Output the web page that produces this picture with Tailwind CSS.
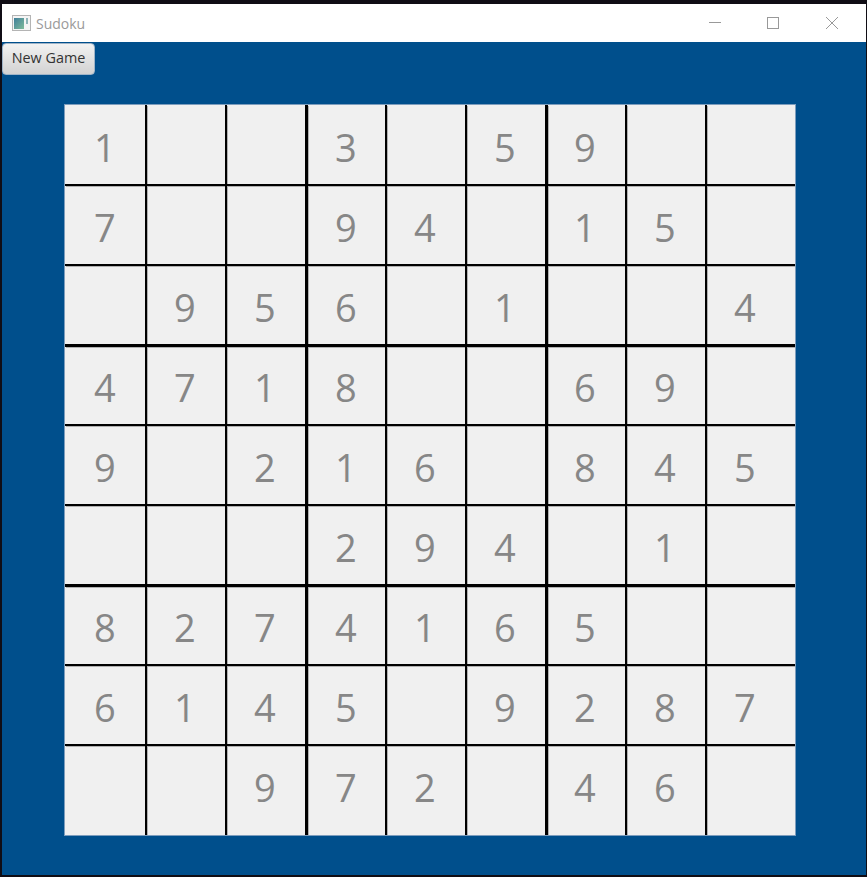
<!DOCTYPE html>
<html>
<head>
<meta charset="utf-8">
<title>Sudoku</title>
<script src="https://cdn.jsdelivr.net/npm/@tailwindcss/browser@4"></script>
</head>
<body class="bg-[#100d15]">
<div class="w-[867px] h-[877px] pt-1 pl-[2px] pr-px pb-[2px] flex flex-col font-['Open_Sans',sans-serif]">
  <header class="h-[38px] shrink-0 bg-white flex items-center">
    <svg class="ml-[10px] mr-[5px]" width="19" height="16" viewBox="0 0 19 16">
      <defs><linearGradient id="g" x1="0" y1="0" x2="1" y2="1"><stop offset="0" stop-color="#3f7f9a"/><stop offset="1" stop-color="#7fbb9a"/></linearGradient></defs>
      <rect x="0.5" y="0.5" width="18" height="15" fill="#f4f4f4" stroke="#b4b4b4"/>
      <rect x="2" y="3" width="10" height="11" fill="url(#g)"/>
      <rect x="14" y="3" width="2" height="6" fill="#8fb4b8"/>
    </svg>
    <span class="text-[14px] text-[#9a9a9a]">Sudoku</span>
    <div class="ml-auto flex items-center">
      <svg class="mr-[46px]" width="12" height="12" viewBox="0 0 12 12"><path d="M0 5.5H12" stroke="#999" fill="none"/></svg>
      <svg class="mr-[47px]" width="12" height="12" viewBox="0 0 12 12"><rect x="0.5" y="0.5" width="11" height="11" stroke="#999" fill="none"/></svg>
      <svg class="mr-[28px]" width="12" height="12" viewBox="0 0 12 12"><path d="M0 0L12 12M12 0L0 12" stroke="#999" fill="none"/></svg>
    </div>
  </header>
  <main class="flex-1 bg-[#004f8c]">
    <button class="mt-px w-[93px] h-8 pb-[3px] rounded-[4px] border border-[#9fb4c8] bg-gradient-to-b from-[#f2f2f2] to-[#d2d2d2] text-[14.4px] text-[#333] block">New Game</button>
    <div class="ml-[63px] mt-[30px] w-[730px] h-[730px] bg-[#f0f0f0] outline outline-1 outline-[#7d9dbd] overflow-hidden grid grid-cols-[82px_80px_81px_79px_80px_81px_79px_80px_88px] grid-rows-[81px_80px_81px_79px_80px_81px_79px_80px_89px] text-[38px] leading-[50px] text-[#878787] [&>div]:border-black [&>div]:border-r-2 [&>div]:border-b-2 [&>div]:shadow-[1px_1px_0_#b0b0b0] [&>div]:pl-[27px] [&>div]:pt-[16px] [&>div:nth-child(9n+1)]:pl-[29px] [&>div:nth-child(9n+7)]:pl-[26px] [&>div:nth-child(9n)]:border-r-0 [&>div:nth-child(9n+3)]:border-r-[3px] [&>div:nth-child(9n+6)]:border-r-[3px] [&>div:nth-child(-n+9)]:pt-[17px] [&>div:nth-child(n+19):nth-child(-n+27)]:border-b-[3px] [&>div:nth-child(n+28):nth-child(-n+36)]:pt-[15px] [&>div:nth-child(n+46):nth-child(-n+54)]:border-b-[3px] [&>div:nth-child(n+55):nth-child(-n+63)]:pt-[15px] [&>div:nth-child(n+73)]:border-b-0">
      <div>1</div><div></div><div></div><div>3</div><div></div><div>5</div><div>9</div><div></div><div></div>
      <div>7</div><div></div><div></div><div>9</div><div>4</div><div></div><div>1</div><div>5</div><div></div>
      <div></div><div>9</div><div>5</div><div>6</div><div></div><div>1</div><div></div><div></div><div>4</div>
      <div>4</div><div>7</div><div>1</div><div>8</div><div></div><div></div><div>6</div><div>9</div><div></div>
      <div>9</div><div></div><div>2</div><div>1</div><div>6</div><div></div><div>8</div><div>4</div><div>5</div>
      <div></div><div></div><div></div><div>2</div><div>9</div><div>4</div><div></div><div>1</div><div></div>
      <div>8</div><div>2</div><div>7</div><div>4</div><div>1</div><div>6</div><div>5</div><div></div><div></div>
      <div>6</div><div>1</div><div>4</div><div>5</div><div></div><div>9</div><div>2</div><div>8</div><div>7</div>
      <div></div><div></div><div>9</div><div>7</div><div>2</div><div></div><div>4</div><div>6</div><div></div>
    </div>
  </main>
</div>
</body>
</html>
